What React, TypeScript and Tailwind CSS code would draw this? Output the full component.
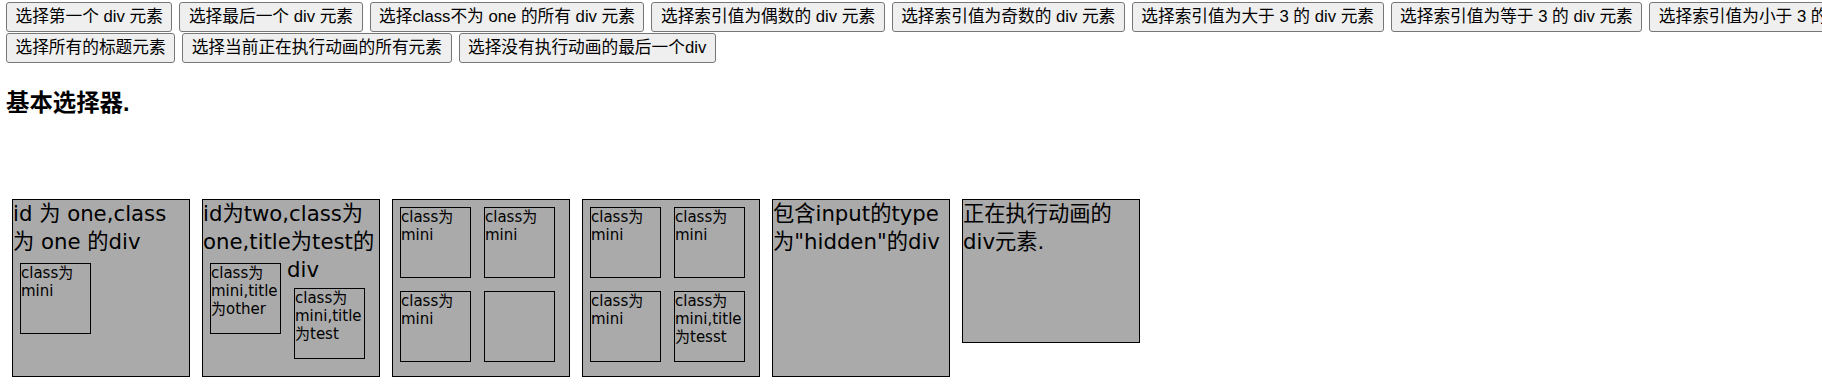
const firstRow = [
  '选择第一个 div 元素',
  '选择最后一个 div 元素',
  '选择class不为 one 的所有 div 元素',
  '选择索引值为偶数的 div 元素',
  '选择索引值为奇数的 div 元素',
  '选择索引值为大于 3 的 div 元素',
  '选择索引值为等于 3 的 div 元素',
  '选择索引值为小于 3 的 div 元素',
];

const secondRow = ['选择所有的标题元素', '选择当前正在执行动画的所有元素', '选择没有执行动画的最后一个div'];

function Btn({ label }: { label: string }) {
  return (
    <button className="h-[30px] shrink-0 whitespace-nowrap rounded-[3px] border border-[#767676] bg-[#efefef] px-[8.5px] font-['Liberation_Sans','Noto_Sans_CJK_SC',sans-serif] text-[16.7px] leading-none text-black">
      {label}
    </button>
  );
}

function Mini({ children, className = 'mt-[7px]' }: { children?: React.ReactNode; className?: string }) {
  return (
    <div
      className={`float-left ml-[7px] mr-[6px] mb-[6px] box-border h-[71px] w-[71px] border border-black bg-[#aaaaaa] text-[15px] leading-[18px] ${className}`}
    >
      {children}
    </div>
  );
}

function Box({ children, short = false }: { children: React.ReactNode; short?: boolean }) {
  return (
    <div
      className={`m-[6px] box-border w-[178px] shrink-0 border border-black bg-[#aaaaaa] text-[21.25px] leading-[28px] text-black ${
        short ? 'h-[144px]' : 'h-[178px]'
      }`}
    >
      {children}
    </div>
  );
}

export default function App() {
  return (
    <div className="min-h-screen w-full overflow-hidden bg-white text-black">
      {/* buttons */}
      <div className="flex flex-col gap-[1px] pt-[2px] pl-[6px]">
        <div className="flex gap-[7px]">
          {firstRow.map((b) => (
            <Btn key={b} label={b} />
          ))}
        </div>
        <div className="flex gap-[7px]">
          {secondRow.map((b) => (
            <Btn key={b} label={b} />
          ))}
        </div>
      </div>

      <h3 className="mt-[26px] h-[28px] pl-[6px] font-['Liberation_Sans','Noto_Sans_CJK_SC',sans-serif] text-[23.4px] font-bold leading-[28px]">
        基本选择器.
      </h3>

      <div className="mt-[76px] flex items-start pl-[6px] font-['DejaVu_Sans','Noto_Sans_CJK_SC',sans-serif]">
        <Box>
          id 为 one,class 为 one 的div
          <Mini>class为mini</Mini>
        </Box>
        <Box>
          id为two,class为one,title为test的div
          <Mini>class为mini,title为other</Mini>
          <Mini className="mt-[4px]">class为mini,title为test</Mini>
        </Box>
        <Box>
          <Mini>class为mini</Mini>
          <Mini>class为mini</Mini>
          <Mini>class为mini</Mini>
          <Mini />
        </Box>
        <Box>
          <Mini>class为mini</Mini>
          <Mini>class为mini</Mini>
          <Mini>class为mini</Mini>
          <Mini>class为mini,title为tesst</Mini>
        </Box>
        <Box>
          包含input的type为"hidden"的div
          <input type="hidden" size={8} />
        </Box>
        <Box short>正在执行动画的div元素.</Box>
      </div>
    </div>
  );
}
